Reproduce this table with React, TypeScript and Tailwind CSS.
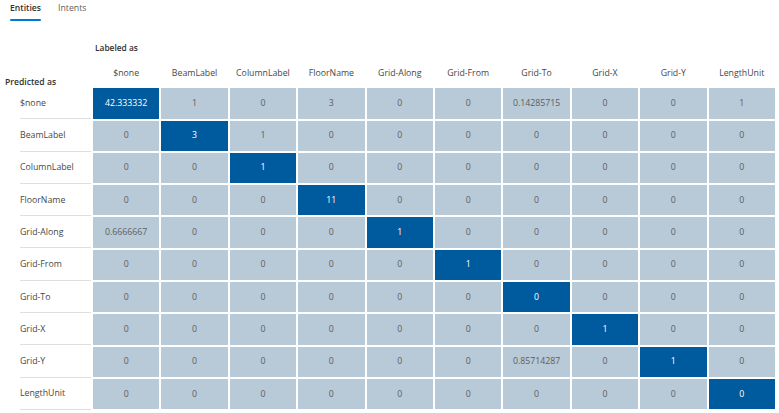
const labels = [
  '$none',
  'BeamLabel',
  'ColumnLabel',
  'FloorName',
  'Grid-Along',
  'Grid-From',
  'Grid-To',
  'Grid-X',
  'Grid-Y',
  'LengthUnit',
];

const matrix: string[][] = [
  ['42.333332', '1', '0', '3', '0', '0', '0.14285715', '0', '0', '1'],
  ['0', '3', '1', '0', '0', '0', '0', '0', '0', '0'],
  ['0', '0', '1', '0', '0', '0', '0', '0', '0', '0'],
  ['0', '0', '0', '11', '0', '0', '0', '0', '0', '0'],
  ['0.6666667', '0', '0', '0', '1', '0', '0', '0', '0', '0'],
  ['0', '0', '0', '0', '0', '1', '0', '0', '0', '0'],
  ['0', '0', '0', '0', '0', '0', '0', '0', '0', '0'],
  ['0', '0', '0', '0', '0', '0', '0', '1', '0', '0'],
  ['0', '0', '0', '0', '0', '0', '0.85714287', '0', '1', '0'],
  ['0', '0', '0', '0', '0', '0', '0', '0', '0', '0'],
];

export default function App() {
  return (
    <div className="w-[779px] h-[413px] bg-white text-[#323130] font-['Open_Sans',sans-serif] text-[8.75px] overflow-hidden">
      {/* Tabs */}
      <div className="flex gap-[17px] pl-[10px]">
        <div className="flex flex-col">
          <span className="font-semibold leading-[16px] text-[8.6px]">Entities</span>
          <span className="mt-[3px] h-[2px] bg-[#0078d4] rounded-sm" />
        </div>
        <span className="leading-[16px] text-[#605e5c]">Intents</span>
      </div>

      <div className="pl-[95px] mt-[19px] font-semibold leading-[16px] text-[8.4px]">Labeled as</div>

      <div className="grid grid-cols-[91px_repeat(10,66.4px)] gap-[2px] auto-rows-[30.3px]">
        <div className="self-end pl-[5px] font-semibold leading-[14px] -mb-[3px] text-[8.6px]">
          Predicted as
        </div>
        {labels.map((l) => (
          <div key={'h' + l} className="text-center leading-[14px] pt-[10px] text-[#484644]">
            {l}
          </div>
        ))}
        {labels.map((row, r) => (
          <>
            <div key={'r' + row} className="ml-[20px] h-[31px] flex items-center border-b border-[#e1dfdd] text-[#484644]">
              {row}
            </div>
            {matrix[r].map((v, c) => (
              <div
                key={row + c}
                className={
                  r === c
                    ? 'flex items-center justify-center bg-[#005a9e] text-white'
                    : 'flex items-center justify-center bg-[#b8c9d8] text-[#605e5c]'
                }
              >
                {v}
              </div>
            ))}
          </>
        ))}
      </div>
    </div>
  );
}
